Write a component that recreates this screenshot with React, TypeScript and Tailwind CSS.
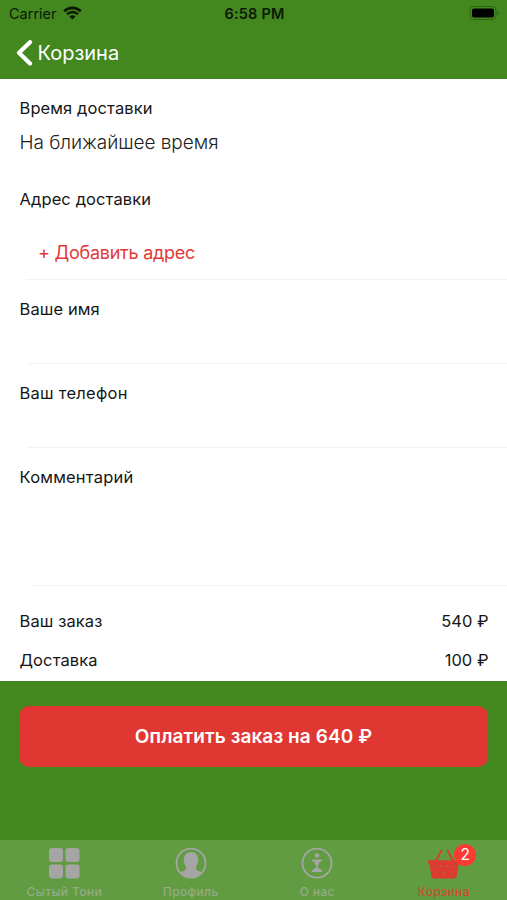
import type { ReactNode } from 'react'

const LABEL = 'px-[19.5px] text-[16.5px] leading-6 text-[#161616]'

function StatusBar() {
  return (
    <div className="grid h-[27px] grid-cols-3 items-center pl-[9px] pr-[7px] text-[#0b1a04]">
      <div className="flex items-center gap-[6px]">
        <span className="pt-[2px] text-[14.5px] leading-none">Carrier</span>
        <svg className="-mt-px" width="19" height="14" viewBox="0 0 19 14" fill="none" stroke="currentColor" strokeWidth="2.7">
          <path d="M1.2 5.2a11.8 11.8 0 0 1 16.6 0" />
          <path d="M4.1 8.2a7.7 7.7 0 0 1 10.8 0" />
          <path d="M9.5 13.6 6.4 10.5a4.4 4.4 0 0 1 6.2 0z" fill="currentColor" stroke="none" />
        </svg>
      </div>
      <span className="pt-[2px] text-center text-[14.5px] font-semibold leading-none tracking-[0.2px]">6:58 PM</span>
      <svg className="-mt-px justify-self-end" width="31" height="14" viewBox="0 0 31 14">
        <rect x="1" y="0.5" width="26" height="13" rx="4" fill="none" stroke="#2c6412" />
        <rect x="3" y="2.5" width="22" height="9" rx="2" fill="#000" />
        <path d="M28.5 5v4c2-.8 2-3.2 0-4z" fill="#2c6412" />
      </svg>
    </div>
  )
}

interface FieldProps {
  title: string
  className: string
  line: string
  tracking?: string
  children?: ReactNode
}

function Field({ title, className, line, tracking = 'tracking-[0.1px]', children }: FieldProps) {
  return (
    <div className={`flex flex-col ${className}`}>
      <div className={`${LABEL} ${tracking}`}>{title}</div>
      {children}
      <div className={`mt-auto h-px shrink-0 bg-[#f2f2f2] ${line}`} />
    </div>
  )
}

function SummaryRow({ title, value }: { title: string; value: string }) {
  return (
    <div className="flex h-[39px] items-center justify-between pl-[19.5px] pr-[18.5px] text-[16.5px] leading-6 text-[#161616]">
      <span className="tracking-[0.1px]">{title}</span>
      <span>{value}</span>
    </div>
  )
}

interface TabProps {
  title: string
  active?: boolean
  badge?: number
  children: ReactNode
}

function Tab({ title, active, badge, children }: TabProps) {
  return (
    <div className={`flex flex-1 flex-col items-center pt-[7px] ${active ? 'text-[#df3a31]' : 'text-[#a5a5a5]'}`}>
      <div className="relative h-8 w-8">
        {children}
        {badge && (
          <span className="absolute -top-[3.5px] left-[26.5px] flex h-[22px] w-[22px] items-center justify-center rounded-full bg-[#fc3b33] text-[15.5px] leading-none text-white">
            {badge}
          </span>
        )}
      </div>
      <span className={`mt-[4.5px] whitespace-nowrap text-[12px] font-medium leading-4 tracking-[0.35px] ${active ? 'text-[#d24a2f]' : 'text-[#95ab86]'}`}>
        {title}
      </span>
    </div>
  )
}

export default function App() {
  return (
    <div className="flex h-[900px] w-[507px] flex-col overflow-hidden bg-[#43871f] font-['Inter','Liberation_Sans',sans-serif]">
      <header className="flex h-[79px] shrink-0 flex-col">
        <StatusBar />
        <div className="flex h-[51px] items-center pl-[15.5px] text-white">
          <svg width="17" height="26" viewBox="0 0 17 26" fill="none" stroke="currentColor" strokeWidth="4.2" strokeLinecap="round" strokeLinejoin="round">
            <path d="M14 2.2 3 12.7l11 10.8" />
          </svg>
          <span className="ml-[5px] text-[20px] leading-7">Корзина</span>
        </div>
      </header>

      <main className="flex h-[602px] shrink-0 flex-col bg-white pt-[17px]">
        <div className="h-[91px]">
          <div className={`${LABEL} tracking-[0.1px]`}>Время доставки</div>
          <div className="mt-[9px] px-[19.5px] text-[19px] font-light leading-7 tracking-[-0.05px] text-[#222]">На ближайшее время</div>
        </div>
        <Field title="Адрес доставки" className="h-[93px]" line="ml-[26px]">
          <button className="ml-[38px] mt-[28px] self-start text-[18px] leading-7 tracking-[-0.25px] text-[#e13a38]">+ Добавить адрес</button>
        </Field>
        <Field title="Ваше имя" className="h-[84px] pt-[17px]" line="ml-[28px]" />
        <Field title="Ваш телефон" className="h-[84px] pt-[17px]" line="ml-[28px]" tracking="tracking-[0.25px]" />
        <Field title="Комментарий" className="h-[138px] pt-[17px]" line="ml-[32px]" tracking="tracking-[0.2px]" />
        <div className="pt-[15px]">
          <SummaryRow title="Ваш заказ" value="540 ₽" />
          <SummaryRow title="Доставка" value="100 ₽" />
        </div>
      </main>

      <div className="flex flex-1 items-start px-[19px] pt-[25px]">
        <button className="h-[61px] w-full rounded-[10px] bg-[#e13733] pt-[2px] text-[19px] font-semibold tracking-[0.1px] text-white">
          Оплатить заказ на 640 ₽
        </button>
      </div>

      <nav className="flex h-[60px] shrink-0 bg-[#619c42] pl-px">
        <Tab title="Сытый Тони">
          <svg width="32" height="32" viewBox="0 0 32 32" fill="currentColor">
            <rect x="1" y="1" width="14" height="14" rx="3" />
            <rect x="17.5" y="1" width="14" height="14" rx="3" />
            <rect x="1" y="17.5" width="14" height="14" rx="3" />
            <rect x="17.5" y="17.5" width="14" height="14" rx="3" />
          </svg>
        </Tab>
        <Tab title="Профиль">
          <svg width="32" height="32" viewBox="0 0 32 32">
            <circle cx="16" cy="16.2" r="14.5" fill="none" stroke="currentColor" strokeWidth="1.8" />
            <path
              fill="currentColor"
              d="M16 5c4.6 0 7 2.9 7 7.2 0 1.2.5 1.3.3 2.8-.2 1.2-.8 1.4-1.1 2.3-.4 1.7-1.2 2.500-1.200 3.900 0 2.800 4.700 2.900 6.500 4.300A14.600 14.600 0 0 1 16 31 14.600 14.600 0 0 1 4.500 25.500c1.800-1.400 6.500-1.500 6.500-4.300 0-1.400-.8-2.200-1.200-3.900-.3-.9-.9-1.100-1.100-2.300-.2-1.500.3-1.600.3-2.800C9 7.900 11.400 5 16 5z"
            />
          </svg>
        </Tab>
        <Tab title="О нас">
          <svg width="32" height="32" viewBox="0 0 32 32">
            <circle cx="16" cy="16.2" r="14.5" fill="none" stroke="currentColor" strokeWidth="1.8" />
            <circle cx="16" cy="8.5" r="2.3" fill="currentColor" />
            <path
              fill="currentColor"
              d="M11.8 12.4h8.4q1 0 1 1t-1 1.200l-1.700.4q0 2.500-1.700 3.500v1.700c.3 1.500 4.400 1.800 4.400 4v.9H10.800v-.9c0-2.200 4.100-2.500 4.400-4v-1.700q-1.700-1-1.700-3.500l-1.700-.4q-1-.2-1-1.200t1-1z"
            />
          </svg>
        </Tab>
        <Tab title="Корзина" active badge={2}>
          <svg width="32" height="32" viewBox="0 0 32 32">
            <path d="M7.8 14 13.6 3.3M25 14 19.5 3.3" fill="none" stroke="currentColor" strokeWidth="1.8" strokeLinecap="round" />
            <path fill="currentColor" d="M1.2 13.2h29.6q1.2 0 1.2 1.2v1.8h-1.3l-2.1 13.1q-.3 2.2-2.2 2.2H5.6q-1.900 0-2.200-2.200L1.300 16.200H0v-1.800q0-1.200 1.200-1.200z" />
            <g fill="#a4703a">
              <circle cx="6.5" cy="19" r="0.9" />
              <circle cx="13" cy="19" r="0.9" />
              <circle cx="19.5" cy="19" r="0.9" />
              <circle cx="26" cy="19" r="0.9" />
              <circle cx="8.5" cy="25.5" r="0.9" />
              <circle cx="16" cy="25.5" r="0.9" />
              <circle cx="23.5" cy="25.5" r="0.9" />
            </g>
          </svg>
        </Tab>
      </nav>
    </div>
  )
}
